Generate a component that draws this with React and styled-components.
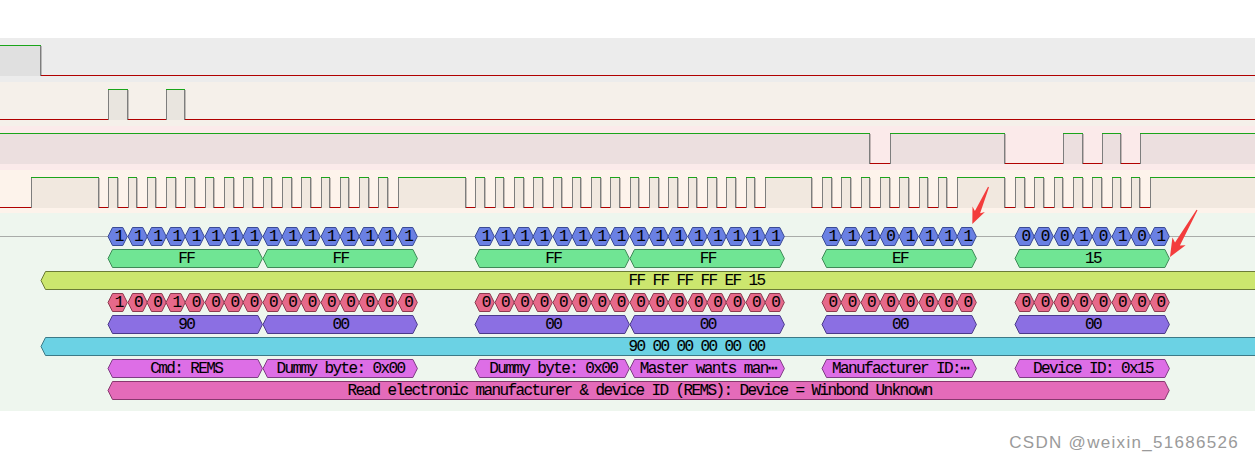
import React from 'react';
import styled, { createGlobalStyle } from 'styled-components';

const VIEW_W = 1255;
const BIT = 19.3;
const HALF = 9.65;

const groups = [
  { start: 108.2, mosi: [0x90, 0x00], miso: [0xff, 0xff] },
  { start: 475.3, mosi: [0x00, 0x00], miso: [0xff, 0xff] },
  { start: 822, mosi: [0x00], miso: [0xef] },
  { start: 1015, mosi: [0x00], miso: [0x15] },
];

const commands = [
  'Cmd: REMS',
  'Dummy byte: 0x00',
  'Dummy byte: 0x00',
  'Master wants man\u22ef',
  'Manufacturer ID:\u22ef',
  'Device ID: 0x15',
];

const bitsOf = (b) => [7, 6, 5, 4, 3, 2, 1, 0].map((i) => (b >> i) & 1);
const hex = (b) => b.toString(16).toUpperCase().padStart(2, '0');

function segmentsFrom(initial, changes, end = VIEW_W) {
  const segs = [];
  let cur = initial;
  let x0 = 0;
  changes.forEach((c) => {
    if (c.v === cur) return;
    segs.push({ x1: x0, x2: c.x, v: cur });
    x0 = c.x;
    cur = c.v;
  });
  segs.push({ x1: x0, x2: end, v: cur });
  return segs;
}

const csChanges = [{ x: 41.3, v: 0 }];

const clkChanges = [{ x: 31.3, v: 1 }];
const mosiChanges = [];
const misoChanges = [];
groups.forEach((g) => {
  const mosiBits = g.mosi.flatMap(bitsOf);
  const misoBits = g.miso.flatMap(bitsOf);
  mosiBits.forEach((bit, k) => {
    const s = g.start + k * BIT;
    clkChanges.push({ x: s - HALF, v: 0 }, { x: s, v: 1 });
    mosiChanges.push({ x: s, v: bit });
    misoChanges.push({ x: s - HALF, v: misoBits[k] });
  });
  mosiChanges.push({ x: g.start + mosiBits.length * BIT, v: 0 });
});

const signals = [
  { key: 'cs', bg: '#ececec', fill: '#e0e0e0', h: 44, segs: segmentsFrom(1, csChanges) },
  { key: 'mosi', bg: '#f5f0ea', fill: '#e9e5df', h: 44, segs: segmentsFrom(0, mosiChanges) },
  { key: 'miso', bg: '#fbeaea', fill: '#ecdfdf', h: 44, segs: segmentsFrom(1, misoChanges) },
  { key: 'clk', bg: '#fdf3eb', fill: '#f1e8df', h: 43, segs: segmentsFrom(0, clkChanges) },
];

const bitAnnos = (which) =>
  groups.flatMap((g) =>
    g[which].flatMap(bitsOf).map((bit, k) => ({
      x: g.start + k * BIT,
      w: BIT,
      label: String(bit),
    }))
  );

const byteAnnos = (which) =>
  groups.flatMap((g) =>
    g[which].map((b, k) => ({ x: g.start + k * 8 * BIT, w: 8 * BIT, label: hex(b) }))
  );

const cmdAnnos = groups
  .flatMap((g) => g.mosi.map((_, k) => ({ x: g.start + k * 8 * BIT, w: 8 * BIT })))
  .map((a, i) => ({ ...a, label: commands[i] }));

const lastGroup = groups[groups.length - 1];
const transEnd = lastGroup.start + 8 * BIT;

const rows = [
  { key: 'misoBits', fill: '#6a80e3', stroke: '#3a4a94', trace: true, items: bitAnnos('miso') },
  { key: 'misoBytes', fill: '#70e594', stroke: '#3e8a57', items: byteAnnos('miso') },
  {
    key: 'misoTrans',
    fill: '#cce66e',
    stroke: '#6b7b36',
    items: [{ x: 41.3, w: 1309, label: 'FF FF FF FF EF 15' }],
  },
  { key: 'mosiBits', fill: '#e6698a', stroke: '#8c3a50', items: bitAnnos('mosi') },
  { key: 'mosiBytes', fill: '#8b6fe3', stroke: '#4b3a8a', items: byteAnnos('mosi') },
  {
    key: 'mosiTrans',
    fill: '#6bd2e4',
    stroke: '#3c7a87',
    items: [{ x: 41.3, w: 1309, label: '90 00 00 00 00 00' }],
  },
  { key: 'cmds', fill: '#dd6ee6', stroke: '#7e3c84', items: cmdAnnos },
  {
    key: 'summary',
    fill: '#e46bb9',
    stroke: '#88386e',
    items: [
      {
        x: groups[0].start,
        w: transEnd - groups[0].start,
        label: 'Read electronic manufacturer & device ID (REMS): Device = Winbond Unknown',
      },
    ],
  },
];

const GlobalStyle = createGlobalStyle`
  html, body {
    margin: 0;
    padding: 0;
    background: #ffffff;
  }
  * { box-sizing: border-box; }
`;

const Screen = styled.div`
  position: relative;
  width: ${VIEW_W}px;
  height: 464px;
  overflow: hidden;
  background: #ffffff;
  padding-top: 38px;
`;

const SignalRow = styled.div`
  height: ${(p) => p.$h}px;
  background: ${(p) => p.$bg};
`;

const WaveSvg = styled.svg`
  display: block;
`;

const DecoderArea = styled.div`
  background: #eef6ee;
  padding: 13px 0 9px;
  display: flex;
  flex-direction: column;
`;

const AnnoRow = styled.div`
  position: relative;
  height: 22px;
`;

const TraceLine = styled.div`
  position: absolute;
  left: 0;
  right: 0;
  top: 10px;
  height: 1px;
  background: #a9aca9;
`;

const Anno = styled.div`
  position: absolute;
  top: 1px;
  height: 19px;
  display: flex;
  align-items: center;
  justify-content: center;
`;

const Shape = styled.svg`
  position: absolute;
  left: 0;
  top: 0;
  overflow: visible;
`;

const Label = styled.span`
  position: relative;
  top: 1px;
  font-family: 'Liberation Mono', 'DejaVu Sans Mono', monospace;
  font-size: 16px;
  letter-spacing: -1.6px;
  padding-left: 1.6px;
  line-height: 19px;
  color: #000;
  -webkit-text-stroke: 0.1px #000;
  white-space: nowrap;
`;

const Footer = styled.div`
  display: flex;
  justify-content: flex-end;
  padding: 22px 16px 0 0;
`;

const Watermark = styled.span`
  font-family: 'Liberation Sans', Arial, sans-serif;
  font-size: 17px;
  line-height: 20px;
  letter-spacing: 1.3px;
  color: #9a9a9a;
`;

const Overlay = styled.svg`
  position: absolute;
  left: 0;
  top: 0;
  pointer-events: none;
`;

function Waveform({ segs, fill, height }) {
  const hi = 7.5;
  const lo = 37.5;
  const edges = segs.slice(1).map((s) => ({ x: Math.round(s.x1), rising: s.v === 1 }));
  return (
    <WaveSvg width={VIEW_W} height={height} shapeRendering="crispEdges">
      {segs
        .filter((s) => s.v === 1)
        .map((s, i) => (
          <rect
            key={`f${i}`}
            x={Math.round(s.x1)}
            y={hi}
            width={Math.round(s.x2) - Math.round(s.x1)}
            height={lo - hi}
            fill={fill}
          />
        ))}
      {edges.map((e, i) =>
        e.rising ? (
          <line key={`e${i}`} x1={e.x + 0.5} x2={e.x + 0.5} y1={hi} y2={lo} stroke="#7d7d7d" />
        ) : (
          <g key={`e${i}`}>
            <line x1={e.x - 0.5} x2={e.x - 0.5} y1={hi} y2={lo} stroke="#7d7d7d" />
            <line x1={e.x + 0.5} x2={e.x + 0.5} y1={hi} y2={lo} stroke="rgba(0,0,0,0.22)" />
          </g>
        )
      )}
      {segs.map((s, i) => (
        <line
          key={`l${i}`}
          x1={Math.round(s.x1)}
          x2={Math.round(s.x2)}
          y1={s.v ? hi : lo}
          y2={s.v ? hi : lo}
          stroke={s.v ? '#1aa51a' : '#b00000'}
        />
      ))}
    </WaveSvg>
  );
}

function Annotation({ x, w, label, fill, stroke }) {
  const p = 4.5;
  const pts = `0,9.5 ${p},0.5 ${w - p},0.5 ${w},9.5 ${w - p},18.5 ${p},18.5`;
  return (
    <Anno style={{ left: x, width: w }}>
      <Shape width={w} height={19}>
        <polygon points={pts} fill={fill} stroke={stroke} strokeWidth="1" />
      </Shape>
      <Label>{label}</Label>
    </Anno>
  );
}

function arrowPoints(tail, tip, back, half) {
  const dx = tip[0] - tail[0];
  const dy = tip[1] - tail[1];
  const L = Math.hypot(dx, dy);
  const ux = dx / L;
  const uy = dy / L;
  const nx = -uy;
  const ny = ux;
  const local = [
    [0, -0.6],
    [L - back + 3, -2.8],
    [L - back, -half],
    [L, 0],
    [L - back, half],
    [L - back + 3, 2.8],
    [0, 0.6],
  ];
  return local
    .map(([a, b]) => `${(tail[0] + ux * a + nx * b).toFixed(1)},${(tail[1] + uy * a + ny * b).toFixed(1)}`)
    .join(' ');
}

export default function App() {
  return (
    <>
      <GlobalStyle />
      <Screen>
        {signals.map((s) => (
          <SignalRow key={s.key} $bg={s.bg} $h={s.h}>
            <Waveform segs={s.segs} fill={s.fill} height={s.h} />
          </SignalRow>
        ))}
        <DecoderArea>
          {rows.map((r) => (
            <AnnoRow key={r.key}>
              {r.trace && <TraceLine />}
              {r.items.map((a, i) => (
                <Annotation key={i} {...a} fill={r.fill} stroke={r.stroke} />
              ))}
            </AnnoRow>
          ))}
        </DecoderArea>
        <Footer>
          <Watermark>CSDN @weixin_51686526</Watermark>
        </Footer>
        <Overlay width={VIEW_W} height={464}>
          <polygon points={arrowPoints([988.5, 187], [972.3, 224], 16, 6.8)} fill="#f33c3c" />
          <polygon points={arrowPoints([1197, 210], [1170, 257], 18, 7.6)} fill="#f33c3c" />
        </Overlay>
      </Screen>
    </>
  );
}
